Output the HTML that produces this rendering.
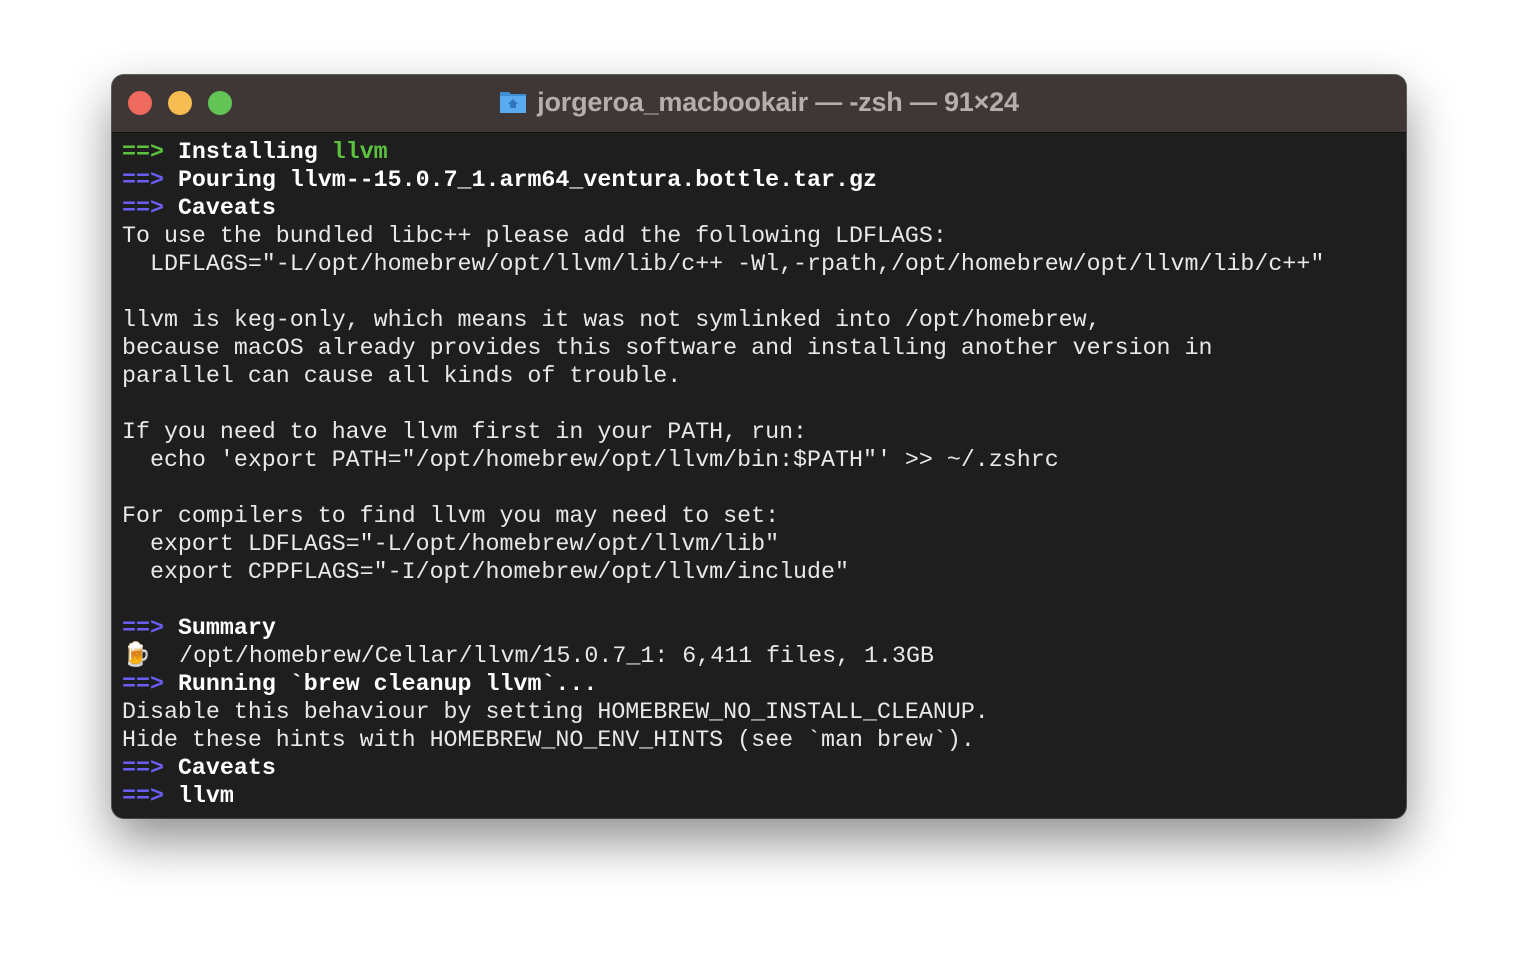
<!DOCTYPE html>
<html><head><style>
body{margin:0;width:1518px;height:966px;background:#fff;overflow:hidden;position:relative}
.win{position:absolute;left:112px;top:75px;width:1294px;height:743px;border-radius:12px;background:#1e1e1e;overflow:hidden;box-shadow:0 22px 50px rgba(0,0,0,.45),0 0 0 1px rgba(0,0,0,.6)}
.tb{position:absolute;left:0;top:0;right:0;height:57px;background:#3e3735;border-bottom:1px solid #111}
.dot{position:absolute;top:16px;width:24px;height:24px;border-radius:50%}
.title{position:absolute;left:0;right:0;top:12px;text-align:center;font:bold 27px "Liberation Sans",sans-serif;color:#b5aeab;letter-spacing:-0.2px}
pre{position:absolute;left:10px;top:63px;margin:0;font:23.3px/28px "Liberation Mono",monospace;color:#e8e8e8}
b{color:#fff}
.g{color:#5cc23e;font-weight:bold}.p{color:#6b5cf2;font-weight:bold}
</style></head><body>
<div class="win">
<div class="tb">
<div class="dot" style="left:16px;background:#ee6a5e"></div>
<div class="dot" style="left:56px;background:#f5bd4f"></div>
<div class="dot" style="left:96px;background:#61c454"></div>
<div class="title"><svg width="28" height="26" viewBox="0 0 28 26" style="vertical-align:-4px;margin-right:10px"><path d="M1 3h9l2 2h15v19H1z" fill="#3d8fd6"/><rect x="1" y="7" width="26" height="17" rx="1" fill="#5aaaf0"/><path d="M14 10l-5 5h2v4h6v-4h2z" fill="#2f76bd"/></svg>jorgeroa_macbookair — -zsh — 91×24</div>
</div>
<pre><span class="g">==&gt;</span> <b>Installing</b> <span class="g">llvm</span>
<span class="p">==&gt;</span> <b>Pouring llvm--15.0.7_1.arm64_ventura.bottle.tar.gz</b>
<span class="p">==&gt;</span> <b>Caveats</b>
To use the bundled libc++ please add the following LDFLAGS:
  LDFLAGS="-L/opt/homebrew/opt/llvm/lib/c++ -Wl,-rpath,/opt/homebrew/opt/llvm/lib/c++"

llvm is keg-only, which means it was not symlinked into /opt/homebrew,
because macOS already provides this software and installing another version in
parallel can cause all kinds of trouble.

If you need to have llvm first in your PATH, run:
  echo 'export PATH="/opt/homebrew/opt/llvm/bin:$PATH"' &gt;&gt; ~/.zshrc

For compilers to find llvm you may need to set:
  export LDFLAGS="-L/opt/homebrew/opt/llvm/lib"
  export CPPFLAGS="-I/opt/homebrew/opt/llvm/include"

<span class="p">==&gt;</span> <b>Summary</b>
<span style="color:#e0a030">🍺</span>  /opt/homebrew/Cellar/llvm/15.0.7_1: 6,411 files, 1.3GB
<span class="p">==&gt;</span> <b>Running `brew cleanup llvm`...</b>
Disable this behaviour by setting HOMEBREW_NO_INSTALL_CLEANUP.
Hide these hints with HOMEBREW_NO_ENV_HINTS (see `man brew`).
<span class="p">==&gt;</span> <b>Caveats</b>
<span class="p">==&gt;</span> <b>llvm</b></pre>
</div>
</body></html>
